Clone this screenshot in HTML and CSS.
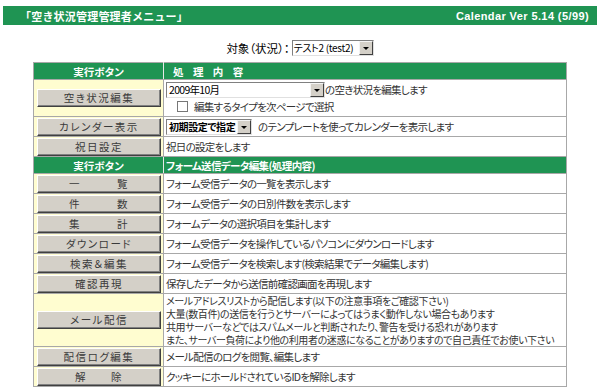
FILE: index.html
```html
<!DOCTYPE html>
<html lang="ja">
<head>
<meta charset="utf-8">
<title>空き状況管理管理者メニュー</title>
<link rel="stylesheet" href="styles.css">
</head>
<body>
<div class="titlebar">
  <span class="title">「空き状況管理管理者メニュー」</span>
  <span class="ver">Calendar Ver 5.14 (5/99)</span>
</div>
<div class="target">
  <span class="label">対象（状況）：</span>
  <span class="sel sel-target"><span class="sel-text">テスト2 (test2)</span><span class="sel-arrow"><i></i></span></span>
</div>
<table class="menu">
  <colgroup><col class="col1"><col class="col2"></colgroup>
  <tr class="head">
    <th class="c1">実行ボタン</th>
    <th class="c2 wide">処 理 内 容</th>
  </tr>
  <tr class="r-edit">
    <td class="act"><span class="btn">空き状況編集</span></td>
    <td class="desc">
      <div class="line"><span class="sel sel-month"><span class="sel-text">2009年10月</span><span class="sel-arrow"><i></i></span></span><span>の空き状況を編集します</span></div>
      <div class="line check"><span class="box"></span><span>編集するタイプを次ページで選択</span></div>
    </td>
  </tr>
  <tr>
    <td class="act"><span class="btn">カレンダー表示</span></td>
    <td class="desc"><div class="line"><span class="sel sel-init"><span class="sel-text">初期設定で指定</span><span class="sel-arrow"><i></i></span></span><span class="after">のテンプレートを使ってカレンダーを表示します</span></div></td>
  </tr>
  <tr>
    <td class="act"><span class="btn">祝日設定</span></td>
    <td class="desc">祝日の設定をします</td>
  </tr>
  <tr class="head">
    <th class="c1">実行ボタン</th>
    <th class="c2">フォーム送信データ編集(処理内容)</th>
  </tr>
  <tr>
    <td class="act"><span class="btn">一　　　覧</span></td>
    <td class="desc">フォーム受信データの一覧を表示します</td>
  </tr>
  <tr>
    <td class="act"><span class="btn">件　　　数</span></td>
    <td class="desc">フォーム受信データの日別件数を表示します</td>
  </tr>
  <tr>
    <td class="act"><span class="btn">集　　　計</span></td>
    <td class="desc">フォームデータの選択項目を集計します</td>
  </tr>
  <tr>
    <td class="act"><span class="btn">ダウンロード</span></td>
    <td class="desc">フォーム受信データを操作しているパソコンにダウンロードします</td>
  </tr>
  <tr>
    <td class="act"><span class="btn">検索＆編集</span></td>
    <td class="desc">フォーム受信データを検索します(検索結果でデータ編集します)</td>
  </tr>
  <tr>
    <td class="act"><span class="btn">確認再現</span></td>
    <td class="desc">保存したデータから送信前確認画面を再現します</td>
  </tr>
  <tr class="r-mail">
    <td class="act"><span class="btn">メール配信</span></td>
    <td class="desc multi">メールアドレスリストから配信します(以下の注意事項をご確認下さい)<br>大量(数百件)の送信を行うとサーバーによってはうまく動作しない場合もあります<br>共用サーバーなどではスパムメールと判断されたり、警告を受ける恐れがあります<br>また、サーバー負荷により他の利用者の迷惑になることがありますので自己責任でお使い下さい</td>
  </tr>
  <tr>
    <td class="act"><span class="btn">配信ログ編集</span></td>
    <td class="desc">メール配信のログを閲覧、編集します</td>
  </tr>
  <tr>
    <td class="act"><span class="btn">解　　除</span></td>
    <td class="desc">クッキーにホールドされているIDを解除します</td>
  </tr>
</table>
</body>
</html>
```
FILE: styles.css
```css
html, body {
  margin: 0;
  padding: 0;
  background: #fff;
}
body {
  font-family: "Noto Sans CJK JP", "Noto Sans", sans-serif;
  font-size: 11px;
  color: #333;
}
.titlebar {
  margin: 6px 3px 0 3px;
  height: 19px;
  background: #1f9453;
  color: #fff;
  display: flex;
  align-items: center;
  justify-content: space-between;
  padding: 0 8px 0 17px;
  font-weight: bold;
}
.title {
  font-size: 11px;
  letter-spacing: 0.2px;
}
.ver {
  font-family: "Liberation Sans", "Noto Sans CJK JP", sans-serif;
  font-size: 11px;
  letter-spacing: 0.4px;
}
.target {
  display: flex;
  justify-content: center;
  align-items: center;
  margin-top: 15px;
  height: 16px;
  padding-left: 0;
  color: #000;
}
.label {
  font-size: 11.5px;
  margin-right: 2px;
  font-feature-settings: "palt";
}
.sel {
  display: inline-flex;
  align-items: stretch;
  height: 16px;
  box-sizing: border-box;
  border: 1px solid;
  border-color: #808080 #e0e0e0 #e0e0e0 #808080;
  background: #fff;
  color: #000;
  font-size: 10.5px;
  font-feature-settings: "palt";
  vertical-align: middle;
}
.sel-text {
  flex: 1;
  padding-left: 2px;
  line-height: 14px;
  white-space: nowrap;
  overflow: hidden;
}
.sel-arrow {
  width: 14px;
  flex: none;
  box-sizing: border-box;
  background: #d4d0c8;
  border: 1px solid;
  border-color: #f4f4f4 #404040 #404040 #f4f4f4;
  display: flex;
  align-items: center;
  justify-content: center;
}
.sel-arrow i {
  width: 0;
  height: 0;
  border-left: 3px solid transparent;
  border-right: 3px solid transparent;
  border-top: 3px solid #000;
  margin-top: 1px;
}
.sel-target { width: 82px; }
.sel-target .sel-text { font-size: 10px; letter-spacing: -0.3px; padding-left: 1px; }
.sel-month { width: 159px; }
.sel-init { width: 86px; font-weight: bold; }
.sel-init .sel-text { font-size: 10px; letter-spacing: -0.4px; }
.menu {
  margin: 6px auto 0;
  width: 534px;
  table-layout: fixed;
  border-collapse: collapse;
  border: 1px solid #9a9a9a;
}
.col1 { width: 130px; }
.menu th, .menu td {
  border: 1px solid #a8a8a8;
  padding: 0;
  height: 19px;
  overflow: hidden;
}
.head th {
  background: #1f9453;
  color: #fff;
  font-weight: bold;
  font-size: 10.5px;
  height: 16px;
  font-feature-settings: "palt";
}
.head .c1 {
  text-align: center;
  letter-spacing: 0;
  border-right-color: #e8e8e8;
}
.head .c2 {
  text-align: left;
  padding-left: 2px;
  letter-spacing: -0.6px;
}
.head .wide {
  padding-left: 9px;
  word-spacing: 4px;
  letter-spacing: 1.5px;
}
.act {
  background: #fffdd0;
  text-align: center;
  border-color: #c8c49c;
}
.btn {
  display: block;
  margin: 0 auto;
  width: 124px;
  height: 18px;
  box-sizing: border-box;
  background: #d4d0c8;
  border: 1px solid;
  border-color: #ffffff #404040 #404040 #ffffff;
  box-shadow: inset -1px -1px 0 #808080;
  color: #3a3a3a;
  font-size: 10.5px;
  line-height: 16px;
  letter-spacing: 1.5px;
  text-indent: 1px;
  white-space: nowrap;
  font-feature-settings: "palt";
}
.desc {
  padding-left: 2px !important;
  font-size: 10.5px;
  font-feature-settings: "palt";
  letter-spacing: -0.7px;
  white-space: nowrap;
  vertical-align: middle;
}
.line {
  display: flex;
  align-items: center;
  height: 17px;
}
.line .after { margin-left: 6px; }
.r-edit td { height: 35px; }
.r-edit .desc { vertical-align: top; padding-top: 1px; }
.check { padding-left: 11px; height: 17px; }
.box {
  width: 11px;
  height: 11px;
  box-sizing: border-box;
  border: 1px solid #777;
  background: #fff;
  margin-right: 6px;
}
.r-mail td { height: 51px; }
.multi {
  font-size: 10px;
  line-height: 13px;
  letter-spacing: -0.4px;
}
```
